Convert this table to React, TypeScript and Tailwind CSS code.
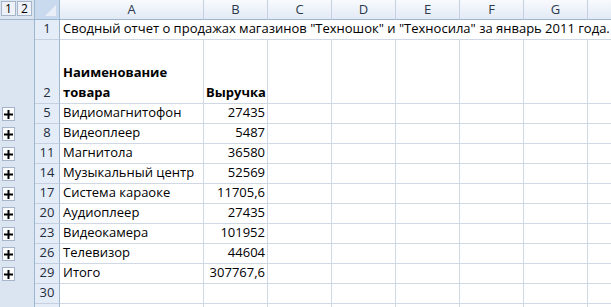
const cols = ["A", "B", "C", "D", "E", "F", "G"];
const widths = ["w-[144px]", "w-[64px]", "w-[64px]", "w-[64px]", "w-[64px]", "w-[64px]", "w-[64px]"];

const rows = [
  { n: 5, a: "Видиомагнитофон", b: "27435" },
  { n: 8, a: "Видеоплеер", b: "5487" },
  { n: 11, a: "Магнитола", b: "36580" },
  { n: 14, a: "Музыкальный центр", b: "52569" },
  { n: 17, a: "Система караоке", b: "11705,6" },
  { n: 20, a: "Аудиоплеер", b: "27435" },
  { n: 23, a: "Видеокамера", b: "101952" },
  { n: 26, a: "Телевизор", b: "44604" },
  { n: 29, a: "Итого", b: "307767,6" },
];

function PlusButton() {
  return (
    <div className="w-[13px] h-[14px] bg-[#fbfcfe] border border-[#a6b5c9] flex items-center justify-center">
      <svg width="9" height="9" viewBox="0 0 9 9">
        <rect x="3.5" y="0" width="2" height="9" fill="#000" />
        <rect x="0" y="3.5" width="9" height="2" fill="#000" />
      </svg>
    </div>
  );
}

function LevelButton({ label }: { label: string }) {
  return (
    <div className="w-[15px] h-[15px] bg-[#eef2f8] border border-[#a6b5c9] flex items-center justify-center text-[12px] text-black leading-none">
      {label}
    </div>
  );
}

function RowHead({ n, h }: { n?: number; h: string }) {
  return (
    <div
      className={`w-[25px] ${h} bg-[#e4ecf7] border-r border-b border-r-[#9eb6ce] border-b-[#c5d1e0] flex items-end justify-center pb-[1px] text-[13px] text-[#1f2d3d]`}
    >
      {n}
    </div>
  );
}

function GridCells({ h, a, b }: { h: string; a?: string; b?: string }) {
  return (
    <>
      <div className={`w-[144px] ${h} border-r border-b border-[#d0d7e5] flex items-end pl-[3px] pb-[1px]`}>
        {a}
      </div>
      <div className={`w-[64px] ${h} border-r border-b border-[#d0d7e5] flex items-end justify-end pr-[2px] pb-[1px]`}>
        {b}
      </div>
      {widths.slice(2).map((w, i) => (
        <div key={i} className={`${w} ${h} border-r border-b border-[#d0d7e5]`} />
      ))}
      <div className={`flex-1 ${h} border-b border-[#d0d7e5]`} />
    </>
  );
}

export default function App() {
  return (
    <div
      className="w-[611px] h-[307px] overflow-hidden bg-white text-[13px] text-black"
      style={{ fontFamily: '"Open Sans", "Noto Sans", sans-serif' }}
    >
      <div className="flex">
        {/* outline gutter */}
        <div className="w-[35px] shrink-0 bg-[#dbe5f1] border-r border-[#9eb6ce] flex flex-col">
          <div className="h-[20px] border-b border-[#9eb6ce] flex gap-[1px] pl-[1px] pt-[1px]">
            <LevelButton label="1" />
            <LevelButton label="2" />
          </div>
          <div className="h-[20px]" />
          <div className="h-[64px]" />
          {rows.map((r) => (
            <div key={r.n} className="h-[20px] flex items-center pl-[2px]">
              <PlusButton />
            </div>
          ))}
          <div className="h-[40px]" />
        </div>

        {/* sheet */}
        <div className="flex-1 flex flex-col">
          {/* column headers */}
          <div className="flex h-[20px]">
            <div className="w-[25px] h-[20px] bg-[#c9d9ee] border-r border-b border-[#9eb6ce] relative overflow-hidden">
              <svg className="absolute right-[3px] bottom-[3px]" width="11" height="11" viewBox="0 0 11 11">
                <polygon points="11,0 11,11 0,11" fill="#e9eef6" />
              </svg>
            </div>
            {cols.map((c, i) => (
              <div
                key={c}
                className={`${widths[i]} h-[20px] bg-gradient-to-b from-[#f8fafd] to-[#e2eaf5] border-r border-b border-r-[#c5d1e0] border-b-[#9eb6ce] flex items-center justify-center text-[13px] text-[#2b3a4c]`}
              >
                {c}
              </div>
            ))}
            <div className="flex-1 h-[20px] bg-gradient-to-b from-[#f8fafd] to-[#e2eaf5] border-b border-[#9eb6ce]" />
          </div>

          {/* row 1 */}
          <div className="flex h-[20px]">
            <RowHead n={1} h="h-[20px]" />
            <div className="flex-1 h-[20px] border-b border-[#d0d7e5] flex items-end pl-[3px] pb-[1px] whitespace-nowrap overflow-hidden">
              Сводный отчет о продажах магазинов "Техношок" и "Техносила" за январь 2011 года.
            </div>
          </div>

          {/* row 2 */}
          <div className="flex h-[64px]">
            <RowHead n={2} h="h-[64px]" />
            <div className="w-[144px] h-[64px] border-r border-b border-[#d0d7e5] flex items-end pl-[3px] pb-[1px] font-bold leading-[20px]">
              Наименование
              <br />
              товара
            </div>
            <div className="w-[64px] h-[64px] border-r border-b border-[#d0d7e5] flex items-end pl-[2px] pb-[1px] font-bold">
              Выручка
            </div>
            {widths.slice(2).map((w, i) => (
              <div key={i} className={`${w} h-[64px] border-r border-b border-[#d0d7e5]`} />
            ))}
            <div className="flex-1 h-[64px] border-b border-[#d0d7e5]" />
          </div>

          {rows.map((r) => (
            <div key={r.n} className="flex h-[20px]">
              <RowHead n={r.n} h="h-[20px]" />
              <GridCells h="h-[20px]" a={r.a} b={r.b} />
            </div>
          ))}

          <div className="flex h-[20px]">
            <RowHead n={30} h="h-[20px]" />
            <GridCells h="h-[20px]" />
          </div>
          <div className="flex h-[20px]">
            <RowHead h="h-[20px]" />
            <GridCells h="h-[20px]" />
          </div>
        </div>
      </div>
    </div>
  );
}
